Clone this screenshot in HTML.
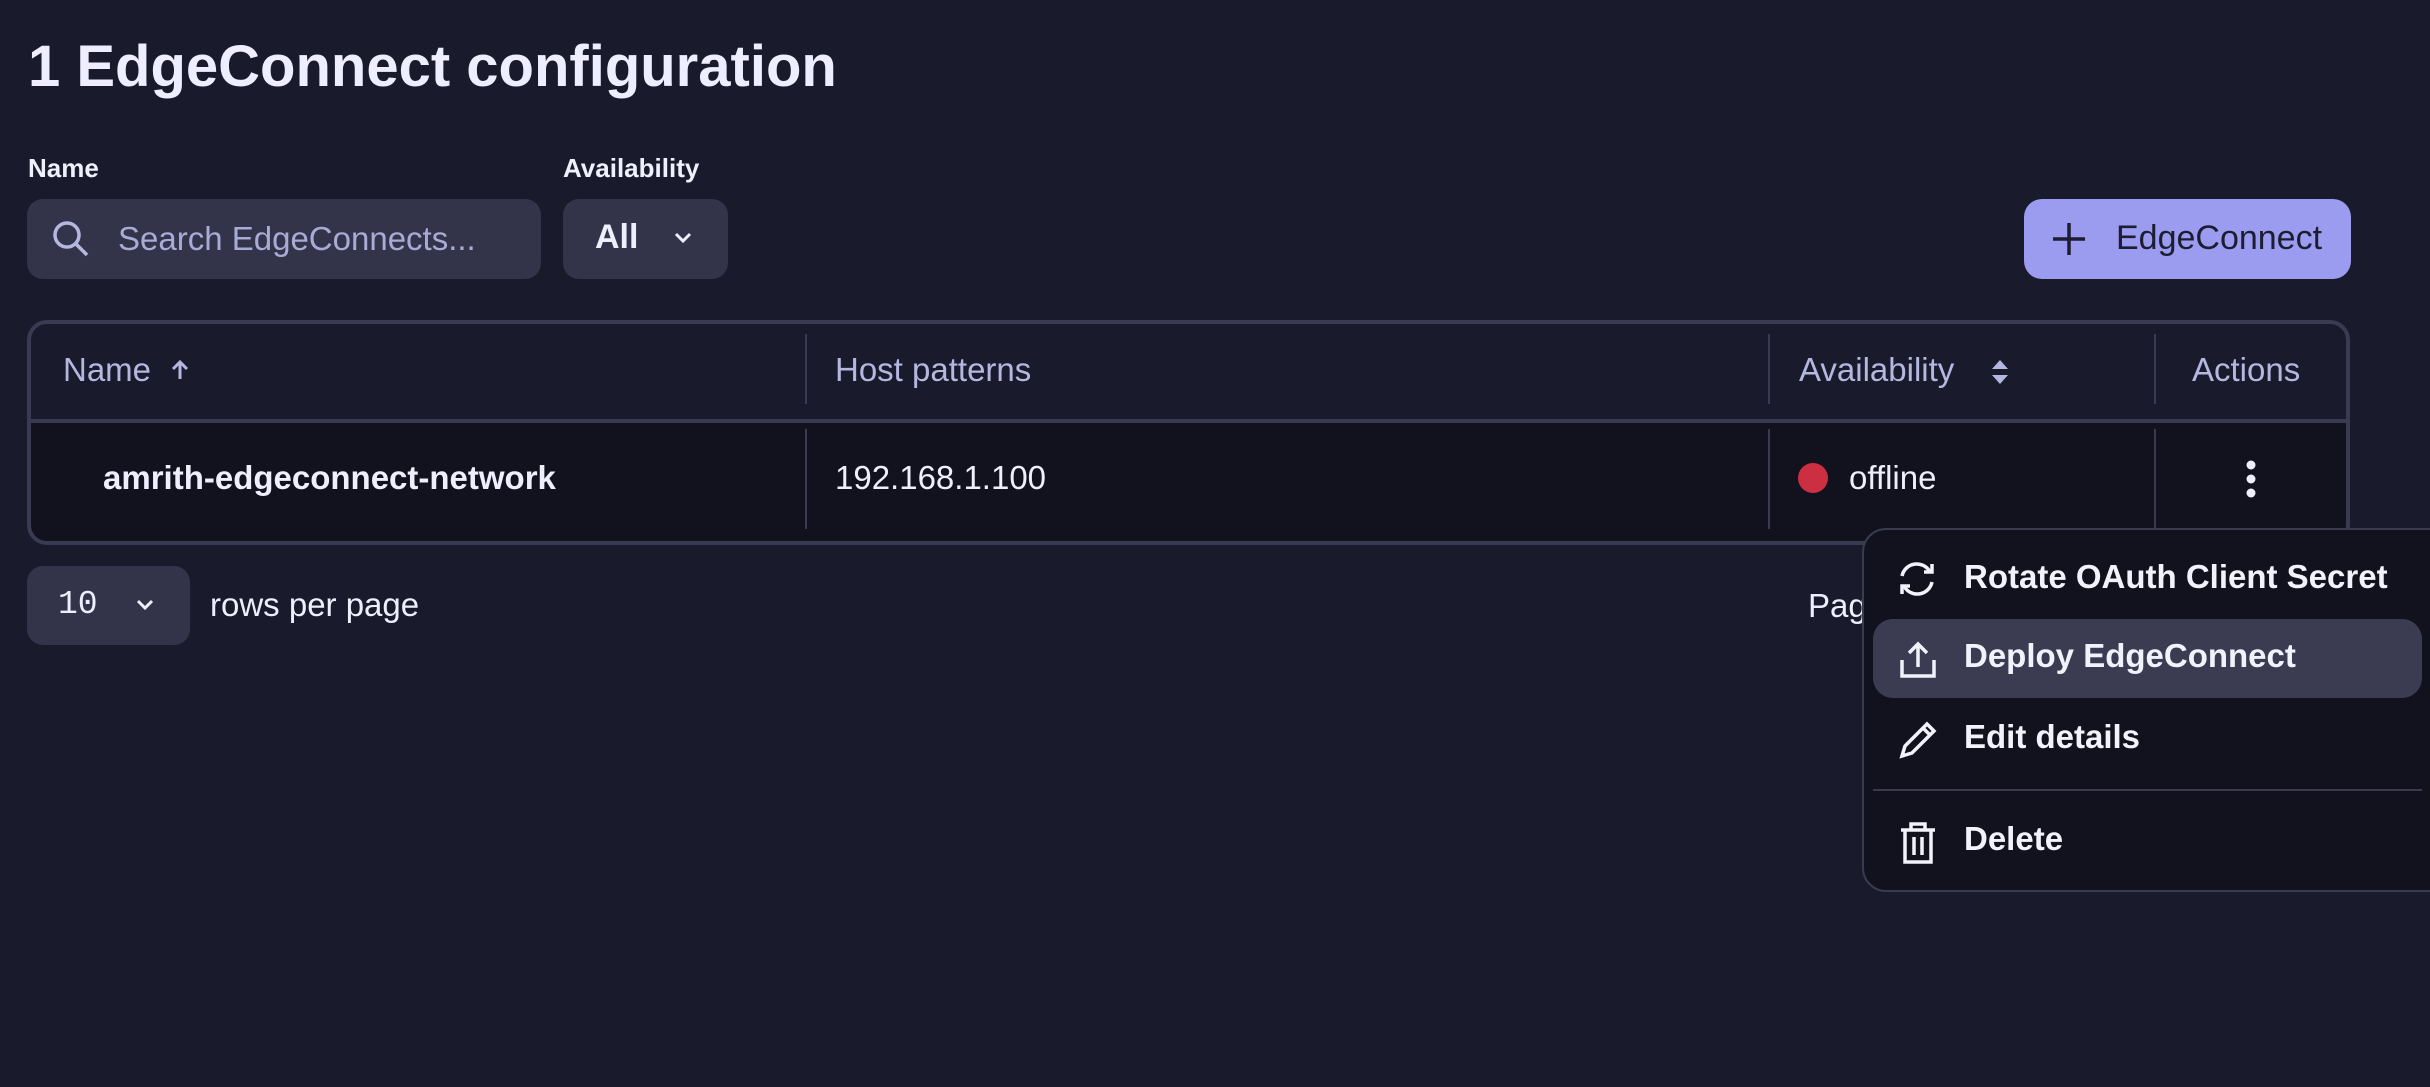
<!DOCTYPE html>
<html><head><meta charset="utf-8"><style>
*{box-sizing:border-box;margin:0;padding:0}
body{width:2430px;height:1087px;background:#191a2c;font-family:"Liberation Sans",sans-serif;color:#eeeefc;position:relative;overflow:hidden}
.a{position:absolute;white-space:nowrap}
.lbl{font-size:26px;font-weight:bold;color:#f0f0fc}
.box{position:absolute;background:#33344a;border-radius:16px}
.hd{font-size:33px;color:#b6b7e0;top:351px}
.div{position:absolute;width:2px;background:#3a3b52}
.mi{position:absolute;left:1964px;font-size:33px;font-weight:bold;color:#f2f2fc}
svg{position:absolute}
</style></head><body>
<div class="a" style="left:28px;top:33px;font-size:58px;font-weight:bold;color:#eeeeff">1 EdgeConnect configuration</div>
<div class="a lbl" style="left:28px;top:153px">Name</div>
<div class="a lbl" style="left:563px;top:153px">Availability</div>
<div class="box" style="left:27px;top:199px;width:514px;height:80px"></div>
<svg style="left:50px;top:218px" width="42" height="42" viewBox="0 0 42 42" fill="none" stroke="#b6b7e0" stroke-width="3.5"><circle cx="17" cy="17" r="12"/><path d="M26 26l11 11"/></svg>
<div class="a" style="left:118px;top:220px;font-size:33px;color:#a9aad6">Search EdgeConnects...</div>
<div class="box" style="left:563px;top:199px;width:165px;height:80px"></div>
<div class="a" style="left:595px;top:218px;font-size:34px;font-weight:bold">All</div>
<svg style="left:672px;top:230px" width="22" height="16" viewBox="0 0 22 16" fill="none" stroke="#eeeefc" stroke-width="3"><path d="M4 4l7 7 7-7"/></svg>
<div style="position:absolute;left:2024px;top:199px;width:327px;height:80px;background:#9b9cf0;border-radius:18px"></div>
<svg style="left:2050px;top:220px" width="38" height="38" viewBox="0 0 38 38" stroke="#1c1c33" stroke-width="3.5"><path d="M19 3v32M3 19h32"/></svg>
<div class="a" style="left:2116px;top:219px;font-size:34px;color:#1c1c33">EdgeConnect</div>
<div style="position:absolute;left:27px;top:320px;width:2323px;height:225px;border:4px solid #3a3b52;border-radius:20px;overflow:hidden">
<div style="position:absolute;left:0;top:95px;width:100%;height:4px;background:#3a3b52"></div>
<div style="position:absolute;left:0;top:99px;width:100%;height:130px;background:#12121f"></div>
</div>
<div class="div" style="left:805px;top:334px;height:70px"></div>
<div class="div" style="left:1768px;top:334px;height:70px"></div>
<div class="div" style="left:2154px;top:334px;height:70px"></div>
<div class="div" style="left:805px;top:429px;height:100px"></div>
<div class="div" style="left:1768px;top:429px;height:100px"></div>
<div class="div" style="left:2154px;top:429px;height:100px"></div>
<div class="a hd" style="left:63px">Name</div>
<svg style="left:170px;top:359px" width="20" height="22" viewBox="0 0 20 22" fill="none" stroke="#b6b7e0" stroke-width="3"><path d="M10 20V3M3 10l7-7 7 7"/></svg>
<div class="a hd" style="left:835px">Host patterns</div>
<div class="a hd" style="left:1799px">Availability</div>
<svg style="left:1990px;top:357px" width="20" height="30" viewBox="0 0 20 30" fill="#b6b7e0"><path d="M2 12L10 3l8 9zM2 18l8 9 8-9z"/></svg>
<div class="a hd" style="left:2192px">Actions</div>
<div class="a" style="left:103px;top:459px;font-size:33px;font-weight:bold">amrith-edgeconnect-network</div>
<div class="a" style="left:835px;top:459px;font-size:33px">192.168.1.100</div>
<div style="position:absolute;left:1798px;top:463px;width:30px;height:30px;border-radius:50%;background:#cc2f42"></div>
<div class="a" style="left:1849px;top:459px;font-size:33px">offline</div>
<svg style="left:2242px;top:459px" width="18" height="40" viewBox="0 0 18 40" fill="#eeeefc"><circle cx="9" cy="6" r="4.5"/><circle cx="9" cy="20" r="4.5"/><circle cx="9" cy="34" r="4.5"/></svg>
<div class="box" style="left:27px;top:566px;width:163px;height:79px"></div>
<div class="a" style="left:58px;top:586px;font-size:33px;font-family:'Liberation Mono',monospace">10</div>
<svg style="left:134px;top:597px" width="22" height="16" viewBox="0 0 22 16" fill="none" stroke="#eeeefc" stroke-width="3"><path d="M4 4l7 7 7-7"/></svg>
<div class="a" style="left:210px;top:586px;font-size:33px">rows per page</div>
<div class="a" style="left:1808px;top:587px;font-size:33px">Page</div>
<div style="position:absolute;left:1862px;top:528px;width:600px;height:364px;background:#12121f;border:2px solid #3a3b50;border-radius:24px"></div>
<div style="position:absolute;left:1873px;top:619px;width:549px;height:79px;background:#3b3c52;border-radius:20px"></div>
<div style="position:absolute;left:1873px;top:789px;width:549px;height:2px;background:#3a3b50"></div>
<svg style="left:1894px;top:558px" width="46" height="42" viewBox="0 0 46 42" fill="none" stroke="#f2f2fc" stroke-width="3.5"><path d="M8 18A15 15 0 0 1 36 14M38 24A15 15 0 0 1 10 28"/><path d="M30 14h8V6M16 28H8v8" /></svg>
<svg style="left:1898px;top:640px" width="40" height="40" viewBox="0 0 40 40" fill="none" stroke="#f2f2fc" stroke-width="3.5"><path d="M4 20v16h32V20M20 27V5M11 13l9-9 9 9"/></svg>
<svg style="left:1898px;top:718px" width="42" height="42" viewBox="0 0 42 42" fill="none" stroke="#f2f2fc" stroke-width="3.5"><path d="M4 38l3-10L29 6l7 7-22 22zM25 10l7 7"/></svg>
<svg style="left:1898px;top:820px" width="40" height="44" viewBox="0 0 40 44" fill="none" stroke="#f2f2fc" stroke-width="3.5"><path d="M3 10h34M13 10V4h14v6M7 10v32h26V10M16 17v18M24 17v18"/></svg>
<div class="a mi" style="top:558px">Rotate OAuth Client Secret</div>
<div class="a mi" style="top:637px">Deploy EdgeConnect</div>
<div class="a mi" style="top:718px">Edit details</div>
<div class="a mi" style="top:820px">Delete</div>
</body></html>
